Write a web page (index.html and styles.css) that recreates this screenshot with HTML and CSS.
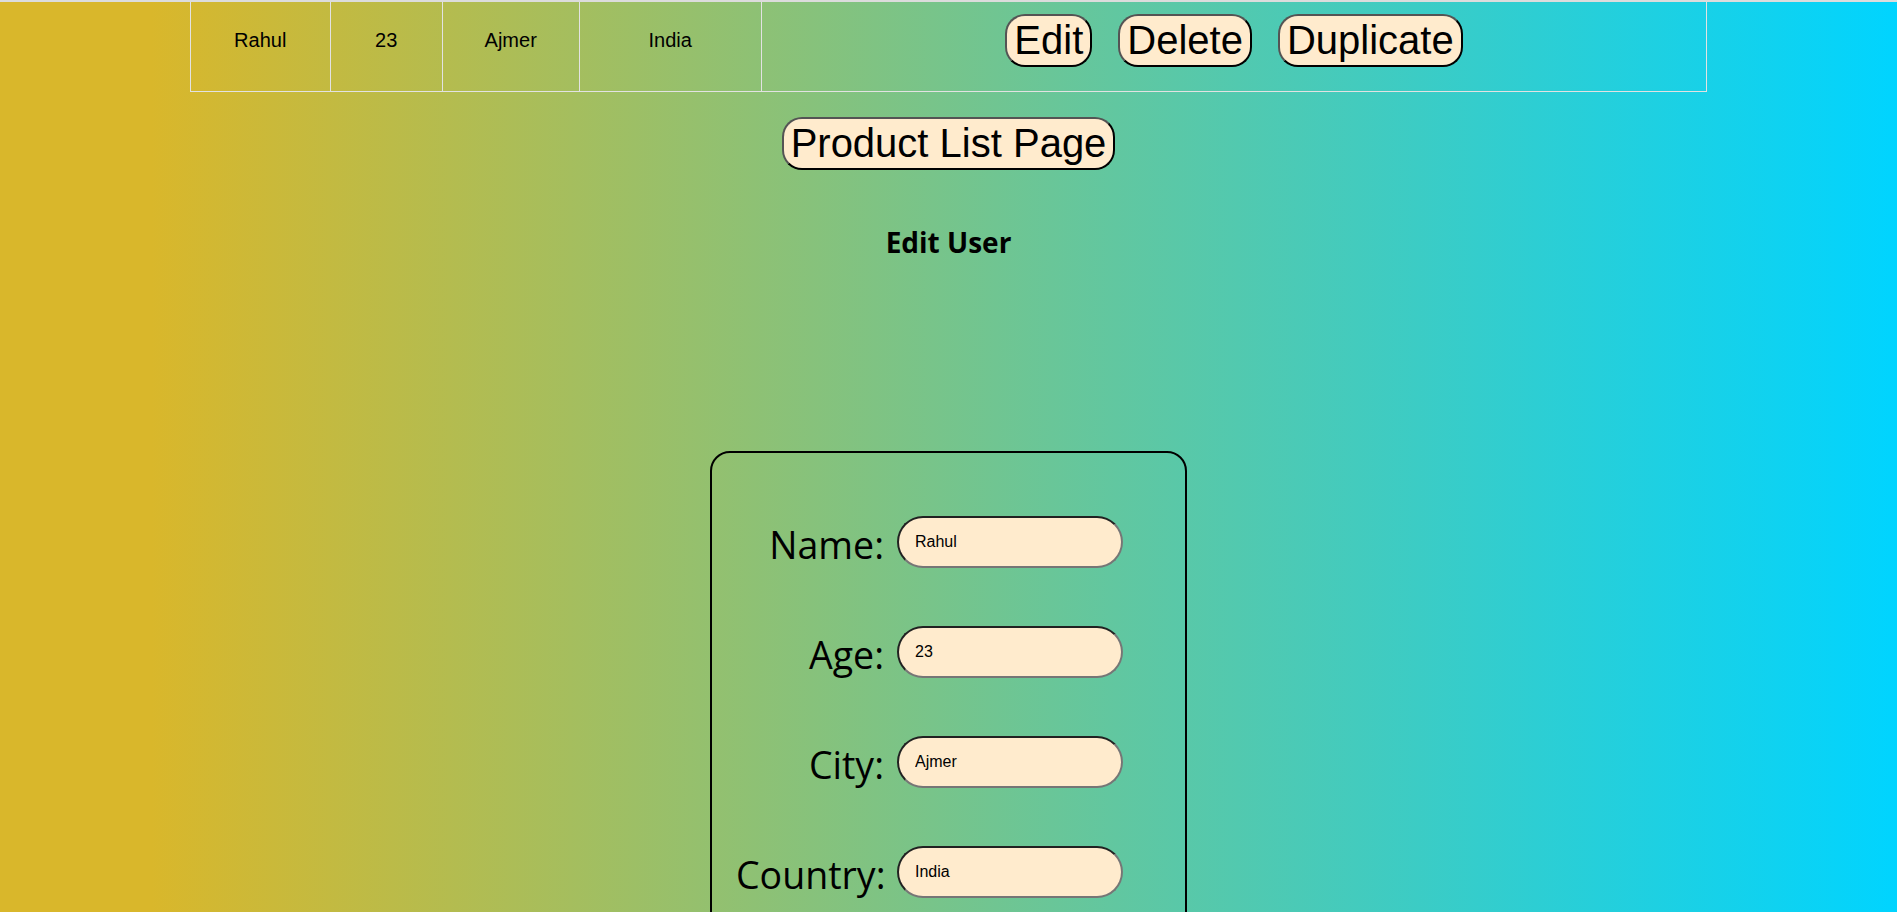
FILE: index.html
```html
<!DOCTYPE html>
<html lang="en">
<head>
<meta charset="utf-8">
<title>Edit User</title>
<link rel="stylesheet" href="styles.css">
</head>
<body>
<div class="page">
  <div class="top-strip"></div>
  <table class="users">
    <tbody>
      <tr>
        <td class="c-name">Rahul</td>
        <td class="c-age">23</td>
        <td class="c-city">Ajmer</td>
        <td class="c-country">India</td>
        <td class="c-actions">
          <div class="actions">
            <button class="btn">Edit</button>
            <button class="btn">Delete</button>
            <button class="btn">Duplicate</button>
          </div>
        </td>
      </tr>
    </tbody>
  </table>
  <div class="nav">
    <button class="btn">Product List Page</button>
  </div>
  <h3 class="title">Edit User</h3>
  <form class="edit-form">
    <label class="lbl" for="name">Name:</label>
    <input class="field" id="name" type="text" value="Rahul">
    <label class="lbl" for="age">Age:</label>
    <input class="field" id="age" type="text" value="23">
    <label class="lbl" for="city">City:</label>
    <input class="field" id="city" type="text" value="Ajmer">
    <label class="lbl" for="country">Country:</label>
    <input class="field" id="country" type="text" value="India">
  </form>
</div>
</body>
</html>
```

FILE: styles.css
```css
html, body {
  margin: 0;
  padding: 0;
  height: 100%;
  overflow: hidden;
}

body {
  background: linear-gradient(90deg, #d9b72b 8%, #00d4ff 100%);
  font-family: "Liberation Sans", Arial, sans-serif;
  color: #000;
}

.page {
  height: 912px;
  overflow: hidden;
}

.top-strip {
  height: 2px;
  background: #dcdcdc;
}

.users {
  width: 80%;
  margin: 0 auto;
  border-collapse: collapse;
  table-layout: fixed;
  font-size: 20px;
}

.users td {
  border: 1px solid #e2e2e2;
  border-top: none;
  text-align: center;
  vertical-align: middle;
  padding: 12px 0 24px 0;
}

.c-name { width: 139px; }
.c-age { width: 111px; }
.c-city { width: 136px; }
.c-country { width: 181px; }

.actions {
  display: flex;
  justify-content: center;
  gap: 26px;
}

.btn {
  box-sizing: border-box;
  height: 53px;
  font-family: "Liberation Sans", Arial, sans-serif;
  font-size: 40px;
  background: #ffebcd;
  color: #000;
  border-radius: 20px;
  padding: 0 7px;
}

.nav {
  display: flex;
  justify-content: center;
  margin-top: 25px;
}

.title {
  margin: 53px 0 0 0;
  text-align: center;
  font-family: "Open Sans", "Noto Sans", sans-serif;
  font-weight: 700;
  font-size: 28px;
  line-height: 38px;
}

.edit-form {
  width: 387px;
  margin: 190px auto 0 auto;
  padding: 63px 62px 200px 24px;
  border: 2px solid #000;
  border-radius: 20px;
  display: grid;
  grid-template-columns: 148px 226px;
  column-gap: 13px;
  row-gap: 58px;
  align-items: center;
}

.lbl {
  font-family: "Open Sans", "Noto Sans", sans-serif;
  font-size: 37.5px;
  line-height: 46px;
  padding-top: 6px;
  text-align: right;
  white-space: nowrap;
}

.field {
  box-sizing: border-box;
  width: 226px;
  height: 52px;
  padding: 0 16px;
  border-radius: 26px;
  background: #ffebcd;
  font-family: "Liberation Sans", Arial, sans-serif;
  font-size: 16px;
  color: #000;
}
```
